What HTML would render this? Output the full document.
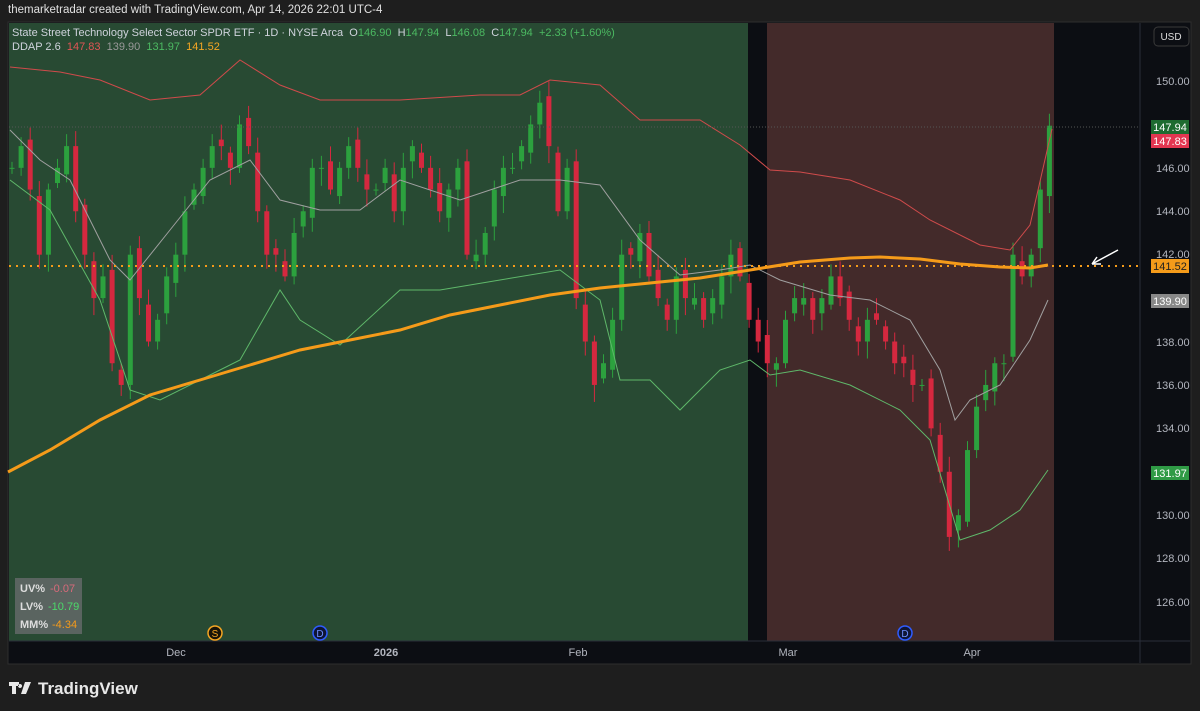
<!DOCTYPE html>
<html><head><meta charset="utf-8"><style>
body{margin:0;width:1200px;height:711px;background:#1e1e1e;overflow:hidden;font-family:"Liberation Sans",sans-serif;position:relative}
.t{position:absolute;font-size:11px;white-space:nowrap}
</style></head><body>
<div class="t" style="left:8px;top:4px;color:#e0e0e0;font-size:11.5px">themarketradar created with TradingView.com, Apr 14, 2026 22:01 UTC-4</div>
<svg width="1200" height="711" style="position:absolute;left:0;top:0" id="s">
<rect x="8" y="22" width="1183" height="642" fill="#0c0e13" stroke="#2e2e2e"/>
<rect x="9" y="23" width="739" height="618" fill="#284a33"/>
<rect x="767" y="23" width="287" height="618" fill="#432a2a"/>
<line x1="1140" y1="23" x2="1140" y2="663" stroke="#2a2e39"/>
<line x1="9" y1="641" x2="1190" y2="641" stroke="#2a2e39"/>
<g id="c"></g>
<polyline fill="none" stroke="#d04b4b" stroke-width="1" points="10,67 60,72 100,80 150,100 200,95 240,60 280,85 320,100 400,100 480,95 520,95 550,80 600,85 640,120 700,120 740,145 770,170 800,172 850,180 900,200 930,220 980,245 1010,250 1030,225 1052,129"/>
<polyline fill="none" stroke="#5fb86a" stroke-width="1" points="10,180 50,210 100,300 130,390 160,400 200,380 240,360 280,290 300,320 340,345 400,290 440,290 500,280 560,270 600,300 620,380 650,380 680,410 720,370 750,360 770,375 800,370 850,385 900,410 930,440 945,490 960,540 990,530 1020,510 1048,470"/>
<polyline fill="none" stroke="#a0a0a0" stroke-width="1" points="10,130 40,160 70,180 110,260 130,280 170,230 210,180 250,160 280,200 320,210 360,210 400,180 460,200 520,180 560,180 600,185 640,240 680,275 720,270 750,265 780,280 830,295 870,300 910,320 940,370 955,420 970,400 1000,385 1030,340 1048,300"/>
<polyline fill="none" stroke="#f59b1a" stroke-width="3" points="8,472 50,450 100,420 150,395 200,380 250,365 300,350 350,340 400,330 450,315 500,305 550,295 600,288 650,283 700,278 750,270 800,262 850,258 880,257 920,259 960,264 1000,267 1030,268 1048,265"/>
<line x1="9" y1="266" x2="1140" y2="266" stroke="#f59b1a" stroke-width="2" stroke-dasharray="2 5"/>
<line x1="9" y1="127" x2="1140" y2="127" stroke="#555" stroke-dasharray="1 2"/>
<path d="M1118 250 L1092 264 M1092 264 L1101 264 M1092 264 L1097 257" stroke="#fff" stroke-width="1.5" fill="none"/>
<circle cx="215" cy="633" r="7" fill="#1a1408" stroke="#f5a623" stroke-width="1.5"/><text x="215" y="637" fill="#f5a623" font-size="10" text-anchor="middle">S</text>
<circle cx="320" cy="633" r="7" fill="#0e1536" stroke="#2f5cff" stroke-width="1.5"/><text x="320" y="637" fill="#6f8fff" font-size="10" text-anchor="middle">D</text>
<circle cx="905" cy="633" r="7" fill="#0e1536" stroke="#2f5cff" stroke-width="1.5"/><text x="905" y="637" fill="#6f8fff" font-size="10" text-anchor="middle">D</text>
<g font-size="11" fill="#b2b5be" text-anchor="middle">
<text x="176" y="656">Dec</text><text x="386" y="656" font-weight="bold">2026</text><text x="578" y="656">Feb</text><text x="788" y="656">Mar</text><text x="972" y="656">Apr</text>
</g>
<g font-size="11" fill="#b2b5be">
<text x="1156" y="85">150.00</text><text x="1156" y="172">146.00</text><text x="1156" y="215">144.00</text><text x="1156" y="258">142.00</text><text x="1156" y="346">138.00</text><text x="1156" y="389">136.00</text><text x="1156" y="432">134.00</text><text x="1156" y="519">130.00</text><text x="1156" y="562">128.00</text><text x="1156" y="606">126.00</text>
</g>
<rect x="1154" y="27" width="35" height="19" rx="4" fill="#0c0e13" stroke="#3a3a3a"/><text x="1171" y="40" fill="#ddd" font-size="10" text-anchor="middle">USD</text>
<rect x="1151" y="120" width="38" height="14" fill="#1e6b30"/><text x="1170" y="131" fill="#fff" font-size="11" text-anchor="middle">147.94</text>
<rect x="1151" y="134" width="38" height="14" fill="#e33651"/><text x="1170" y="145" fill="#fff" font-size="11" text-anchor="middle">147.83</text>
<rect x="1151" y="259" width="38" height="14" fill="#f59b1a"/><text x="1170" y="270" fill="#222" font-size="11" text-anchor="middle">141.52</text>
<rect x="1151" y="294" width="38" height="14" fill="#888"/><text x="1170" y="305" fill="#fff" font-size="11" text-anchor="middle">139.90</text>
<rect x="1151" y="466" width="38" height="14" fill="#2f9a45"/><text x="1170" y="477" fill="#fff" font-size="11" text-anchor="middle">131.97</text>
<rect x="15" y="578" width="67" height="56" fill="#5a6460"/>
<g font-size="11" font-weight="bold"><text x="20" y="592" fill="#ddd">UV%</text><text x="50" y="592" fill="#d86a7a" font-weight="normal">-0.07</text>
<text x="20" y="610" fill="#ddd">LV%</text><text x="48" y="610" fill="#4cd96a" font-weight="normal">-10.79</text>
<text x="20" y="628" fill="#ddd">MM%</text><text x="52" y="628" fill="#f59b1a" font-weight="normal">-4.34</text></g>
<text x="38" y="694" fill="#e8e8e8" font-size="17" font-weight="bold">TradingView</text>
<path d="M9 682h10v4h-3v8h-4v-8h-3z M20 684a2 2 0 1 0 .1 0z M25 682h6l-5 12h-5z" fill="#e8e8e8"/>
</svg>
<div class="t" style="left:12px;top:27px;color:#cfd3dc">State Street Technology Select Sector SPDR ETF · 1D · NYSE Arca &nbsp;O<span style="color:#4cba62">146.90</span> &nbsp;H<span style="color:#4cba62">147.94</span> &nbsp;L<span style="color:#4cba62">146.08</span> &nbsp;C<span style="color:#4cba62">147.94</span> &nbsp;<span style="color:#4cba62">+2.33 (+1.60%)</span></div>
<div class="t" style="left:12px;top:41px;color:#cfd3dc">DDAP 2.6 &nbsp;<span style="color:#e05555">147.83</span> &nbsp;<span style="color:#999">139.90</span> &nbsp;<span style="color:#4cba62">131.97</span> &nbsp;<span style="color:#f5a623">141.52</span></div>
<script>
var c=[146,147,145,142,145,146,147,144,142,140,141,137,136,142,140,138,139,141,142,144,145,146,147,147,146,148,147,144,142,142,141,143,144,146,146,145,146,147,146,145,145,146,144,146,147,146,145,144,145,146,142,142,143,145,146,146,147,148,149,147,144,146,140,138,136,137,139,142,142,143,141,140,139,141,140,140,139,140,141,142,141,139,138,137,137,139,140,140,139,140,141,140,139,138,139,139,138,137,137,136,136,134,132,129,130,133,135,136,137,137,142,141,142,145,147.94];
var g=document.getElementById('c'),h='',Y=function(p){return 81+(150-p)*21.71};
for(var i=0;i<c.length;i++){var x=12+i*9.1,o=i?c[i-1]+(i%3-1)*0.3:146,cl=c[i],up=cl>=o,col=up?'#2ca13e':'#d5283f';
var t=Y(Math.max(o,cl)),b=Y(Math.min(o,cl));if(b-t<1)b=t+1;
h+='<line x1="'+x+'" x2="'+x+'" y1="'+(t-6-(i%4)*3)+'" y2="'+(b+5+(i%5)*3)+'" stroke="'+col+'"/><rect x="'+(x-2.5)+'" y="'+t+'" width="5" height="'+(b-t)+'" fill="'+col+'"/>';}
g.innerHTML=h;
</script>
</body></html>
